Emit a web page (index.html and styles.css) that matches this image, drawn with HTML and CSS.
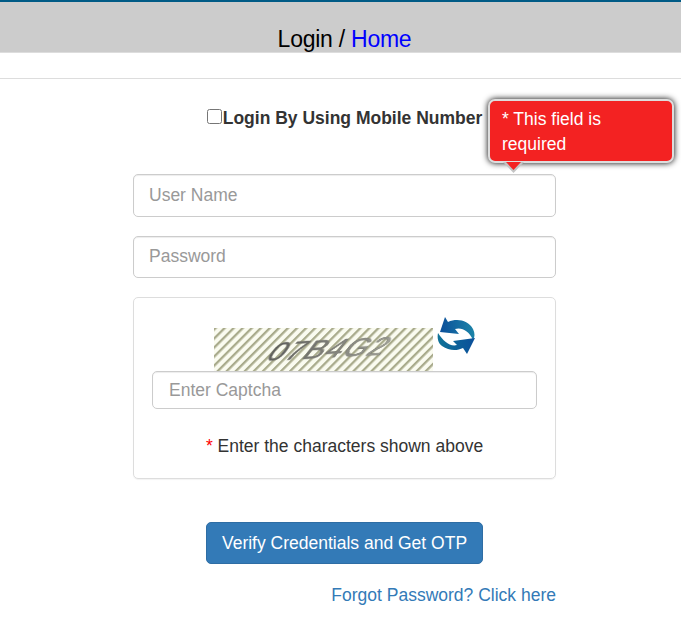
FILE: index.html
```html
<!DOCTYPE html>
<html lang="en">
<head>
    <meta charset="UTF-8">
    <title>Login</title>
    <link rel="stylesheet" href="styles.css">
</head>
<body>
    <div class="top-strip"></div>
    <div class="header">Login / <a href="#" class="home-link">Home</a></div>
    <hr class="divider">

    <form class="login-form">
        <div class="mobile-row">
            <input type="checkbox" class="mobile-check" id="mobile">
            <label for="mobile">Login By Using Mobile Number</label>
        </div>

        <div class="field-wrap">
            <input type="text" class="field" placeholder="User Name">
            <div class="tip">* This field is required</div>
        </div>
        <input type="password" class="field" placeholder="Password">

        <div class="captcha-box">
            <div class="captcha-row">
                <svg class="captcha-img" width="219" height="43" viewBox="0 0 219 43" role="img" aria-label="captcha">
                    <defs>
                        <pattern id="stripes" width="6.4" height="6.4" patternUnits="userSpaceOnUse" patternTransform="rotate(45)">
                            <rect width="6.4" height="6.4" fill="#fafbf0"></rect>
                            <rect width="2.3" height="6.4" fill="#a9ab8c"></rect>
                        </pattern>
                        <linearGradient id="fade" x1="0" y1="0" x2="1" y2="0">
                            <stop offset="0" stop-color="#5c5c5a"></stop>
                            <stop offset="1" stop-color="#a2a39a"></stop>
                        </linearGradient>
                        <filter id="soft"><feGaussianBlur stdDeviation="0.6"></feGaussianBlur></filter>
                    </defs>
                    <rect width="219" height="43" fill="url(#stripes)"></rect>
                    <text class="captcha-text" fill="url(#fade)" transform="translate(50 33) rotate(-3) skewX(-40) scale(1.2 1)" filter="url(#soft)">07B4G2</text>
                </svg>
                <svg class="refresh" width="40" height="38" viewBox="0 0 40 38" role="img" aria-label="refresh">
                    <defs>
                        <linearGradient id="blue1" x1="0" y1="0" x2="1" y2="0">
                            <stop offset="0" stop-color="#0b4f9a"></stop>
                            <stop offset="1" stop-color="#1c84a8"></stop>
                        </linearGradient>
                        <linearGradient id="blue2" x1="0" y1="0" x2="1" y2="0">
                            <stop offset="0" stop-color="#0f7398"></stop>
                            <stop offset="1" stop-color="#0b4f9a"></stop>
                        </linearGradient>
                    </defs>
                    <path fill="url(#blue1)" d="M8 0 L11 5 C20 1 31 3 36 12 C38 16 38 20 36 23 C32 14 25 10 18 12 L22 17 L3 15 Z"></path>
                    <path fill="url(#blue2)" d="M1 16 C0 21 1 26 5 29 C12 34 20 34 26 31 L30 37 L38 21 L16 24 L20 28 C13 30 6 24 1 16 Z"></path>
                </svg>
            </div>
            <input type="text" class="field captcha-field" placeholder="Enter Captcha">
            <p class="captcha-note"><span class="star">*</span> Enter the characters shown above</p>
        </div>

        <div class="actions">
            <button type="button" class="btn-verify">Verify Credentials and Get OTP</button>
        </div>
        <div class="forgot"><a href="#">Forgot Password? Click here</a></div>
    </form>
</body>
</html>
```

FILE: styles.css
```css
* {
    box-sizing: border-box;
}
body {
    margin: 0;
    font-family: "Liberation Sans", Arial, sans-serif;
    font-size: 17.5px;
    color: #333;
    background-color: #fff;
}
.top-strip {
    height: 2px;
    background-color: #005b86;
}
.header {
    height: 51px;
    padding: 24px 0 0 8px;
    background-color: #ccc;
    border-bottom: 1px solid #ddd;
    color: #000;
    font-size: 23px;
    letter-spacing: -0.25px;
    line-height: 27px;
    text-align: center;
}
.home-link {
    color: #00f;
    text-decoration: none;
}
.divider {
    margin: 25px 0 0;
    border: 0;
    border-top: 1px solid #ddd;
}
.login-form {
    width: 423px;
    margin-left: 133px;
}
.mobile-row {
    display: flex;
    align-items: flex-start;
    justify-content: center;
    height: 95px;
    padding-top: 28px;
}
.mobile-check {
    width: 15px;
    height: 15px;
    margin: 2px 1px 0 0;
}
.mobile-row label {
    font-weight: bold;
    line-height: 22px;
}
.field-wrap {
    position: relative;
}
.field {
    display: block;
    width: 100%;
    height: 42.5px;
    margin-bottom: 19px;
    padding: 0 15px;
    font-family: inherit;
    font-size: 17.5px;
    color: #555;
    background-color: #fff;
    border: 1px solid #ccc;
    border-radius: 5px;
    box-shadow: inset 0 1px 1px rgba(0, 0, 0, 0.075);
}
.field::placeholder {
    color: #999;
    opacity: 1;
}
.tip {
    position: absolute;
    left: 355px;
    top: -75px;
    width: 186px;
    height: 64px;
    padding: 6px 12px;
    line-height: 25px;
    color: #fff;
    background-color: #f32222;
    border: 2px solid #ddd;
    border-radius: 7px;
    box-shadow: 0 0 6px #000;
}
.tip::before,
.tip::after {
    content: "";
    position: absolute;
    clip-path: polygon(0 0, 100% 0, 50% 100%);
}
.tip::before {
    left: 13px;
    bottom: -12px;
    width: 21px;
    height: 11px;
    background-color: #c4c4c4;
}
.tip::after {
    left: 16px;
    bottom: -9px;
    width: 15px;
    height: 8px;
    background-color: #f32222;
}
.captcha-box {
    height: 182px;
    padding: 19px 18px 0;
    border: 1px solid #ddd;
    border-radius: 5px;
    box-shadow: 0 1px 1px rgba(0, 0, 0, 0.05);
}
.captcha-row {
    display: flex;
    align-items: flex-start;
    height: 54px;
    padding-left: 62px;
}
.captcha-img {
    display: block;
    margin-top: 11px;
}
.captcha-text {
    font-family: "Liberation Sans", Arial, sans-serif;
    font-size: 25px;
    letter-spacing: 1.2px;
    stroke: #77776f;
    stroke-width: 0.5;
}
.refresh {
    display: block;
    margin-left: 4px;
}
.captcha-field {
    width: 385px;
    height: 38px;
    margin: 0;
    padding: 0 16px;
}
.captcha-note {
    margin: 26px 0 0;
    line-height: 22px;
    text-align: center;
}
.star {
    color: #f00;
}
.actions {
    margin-top: 43px;
    text-align: center;
}
.btn-verify {
    height: 42px;
    width: 277px;
    padding: 0;
    font-family: inherit;
    font-size: 17.5px;
    color: #fff;
    background-color: #337ab7;
    border: 1px solid #2e6da4;
    border-radius: 5px;
}
.forgot {
    margin-top: 20px;
    line-height: 22px;
    text-align: right;
}
.forgot a {
    color: #337ab7;
    text-decoration: none;
}
```
